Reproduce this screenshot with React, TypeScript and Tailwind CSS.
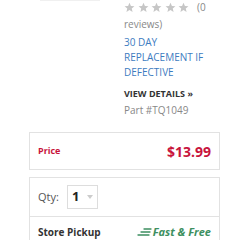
import React from "react"

const Star = () => (
    <svg viewBox="0 0 24 24" className="w-[11px] h-[11px]" fill="#c6c6c6">
        <path d="M12 1.5l3.1 7 7.6.6-5.8 5 1.8 7.5L12 17.7l-6.7 3.9 1.8-7.5-5.8-5 7.6-.6z" />
    </svg>
)

const Speed = () => (
    <svg viewBox="0 0 15 10" className="w-[15px] h-[10px]" stroke="#3d8f60" strokeWidth="1.3" strokeLinecap="round">
        <line x1="7" y1="2" x2="14" y2="2" />
        <line x1="4" y1="5" x2="13" y2="5" />
        <line x1="1" y1="8" x2="12" y2="8" />
    </svg>
)

export default function App() {
    return (
        <div className="w-[240px] h-[240px] overflow-hidden bg-white font-['Open_Sans',sans-serif]">
            <div className="flex">
                <div className="w-[124px] shrink-0">
                    <div className="ml-[40px] w-[60px] h-px bg-[#f0f0f0]"></div>
                </div>
                <div className="flex-1 text-[10px] -mt-[1px]">
                    <div className="flex items-center h-[17px]">
                        <div className="flex gap-[2.5px]">
                            <Star /><Star /><Star /><Star /><Star />
                        </div>
                        <span className="ml-[8px] text-[#888]">(0</span>
                    </div>
                    <div className="leading-[17px] text-[#888]">reviews)</div>
                    <div className="mt-[1.5px] leading-[15px] text-[#3d7cbf] uppercase">
                        30 Day<br />Replacement if<br />Defective
                    </div>
                    <div className="mt-[6.5px] leading-[15px] font-bold text-[9px] text-[#333]">VIEW DETAILS »</div>
                    <div className="mt-[2px] leading-[15px] text-[#888]">Part #TQ1049</div>
                </div>
            </div>

            <div className="ml-[29px] mt-[14px] w-[191px] h-[38px] border border-[#e2e2e2] flex items-center justify-between pl-[8px] pr-[8px]">
                <span className="text-[9px] font-bold text-[#c8143c]">Price</span>
                <span className="text-[14px] font-bold text-[#c8143c]">$13.99</span>
            </div>

            <div className="ml-[29px] mt-[7px] w-[191px] border border-[#e2e2e2]">
                <div className="h-[39px] flex items-center pl-[8px] border-b border-[#e2e2e2]">
                    <span className="text-[11px] text-[#555]">Qty:</span>
                    <div className="ml-[8px] w-[31px] h-[24px] border border-[#ddd] flex items-center pl-[4px]">
                        <span className="text-[13px] font-bold text-[#222]">1</span>
                        <svg viewBox="0 0 6 4" className="ml-[8px] w-[6px] h-[4px]" fill="#ccc">
                            <path d="M0 0h6L3 4z" />
                        </svg>
                    </div>
                </div>
                <div className="h-[30px] flex items-center justify-between pl-[8px] pr-[8px]">
                    <span className="text-[10px] font-bold text-[#333]">Store Pickup</span>
                    <span className="flex items-center gap-[1px]">
                        <Speed />
                        <span className="text-[11px] font-bold italic text-[#3d8f60]">Fast &amp; Free</span>
                    </span>
                </div>
            </div>
        </div>
    )
}
